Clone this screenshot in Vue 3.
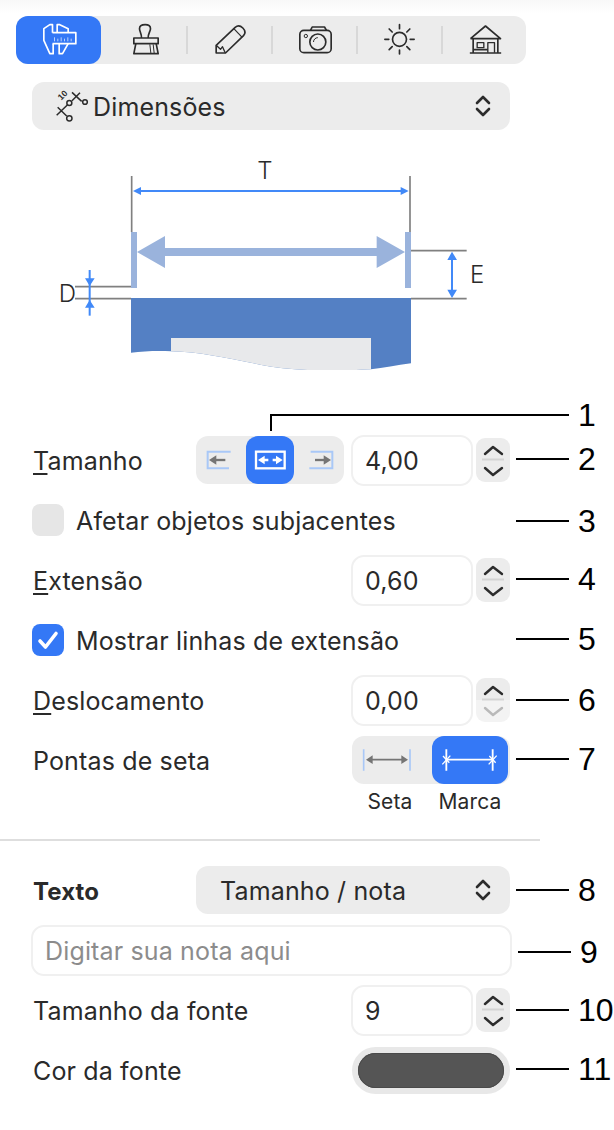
<script setup>
</script>

<template>
  <div class="page">
    <div class="toolbar">
      <div class="tool active">
        <svg width="36" height="36" viewBox="73.5 30 108 108" fill="none" stroke="#fff" stroke-width="5" stroke-linejoin="round">
          <path d="M108 62 V38 H100 L82 50 V85 L100 125 H110 V95" />
          <path d="M122 62 V38 H130 L155 50 V62" />
          <path d="M108 62 H178 V95 H108" />
          <path d="M128 95 V125 H138 L155 95" />
          <path d="M114 76 V88 M124 80 V88 M134 76 V88 M144 80 V88 M154 76 V88 M164 80 V88" stroke-width="2.500" stroke-opacity=".8" />
        </svg>
      </div>
      <div class="tool">
        <svg width="36" height="36" viewBox="328.5 30 108 108" fill="none" stroke="#2c2c2c" stroke-width="5" stroke-linejoin="round">
          <path d="M375 78 C376 66 369 58 369 50 C369 42 377 38 386 38 C395 38 402 42 402 50 C402 58 394 66 395 78" />
          <path d="M352 78 H425 V95 H352 Z" />
          <path d="M358 95 L352 125 H425 L419 95" />
          <path d="M400 97 L403 123 M410 97 L413 123" stroke-width="3" />
        </svg>
      </div>
      <div class="tool sep">
        <svg width="36" height="36" viewBox="31.5 30 108 108" fill="none" stroke="#2c2c2c" stroke-width="5" stroke-linejoin="round">
          <path d="M47 123 L47 100 L104 46 C112 39 120 41 127 48 C135 56 136 63 129 71 L75 123 Z" />
          <path d="M100 50 L125 76" stroke-width="3.500" />
          <path d="M47 100 L60 112 L66 104 L72 118 L75 123" stroke-width="4" />
        </svg>
      </div>
      <div class="tool sep">
        <svg width="36" height="36" viewBox="286.5 30 108 108" fill="none" stroke="#2c2c2c" stroke-width="5" stroke-linejoin="round">
          <rect x="298" y="55" width="94" height="67" rx="12" />
          <path d="M330 55 L335 45 H372 L378 55" />
          <circle cx="352" cy="90" r="24" />
          <path d="M339 90 A13 13 0 0 1 352 77" stroke-width="3" />
          <circle cx="316" cy="72" r="5" stroke-width="3" />
        </svg>
      </div>
      <div class="tool sep">
        <svg width="36" height="36" viewBox="31.5 30 108 108" fill="none" stroke="#2c2c2c" stroke-width="5" stroke-linecap="round">
          <circle cx="87" cy="82" r="21" />
          <path d="M87 38 V50 M87 114 V126 M43 82 H55 M119 82 H131 M56 51 L65 60 M118 51 L109 60 M56 113 L65 104 M118 113 L109 104" />
        </svg>
      </div>
      <div class="tool sep">
        <svg width="36" height="36" viewBox="286.5 30 108 108" fill="none" stroke="#2c2c2c" stroke-width="5" stroke-linejoin="round">
          <path d="M300 80 L345 42 L390 80 H300" />
          <path d="M308 80 V122 M382 80 V122 M298 123 H392 M308 113 H352" />
          <rect x="320" y="92" width="20" height="15" stroke-width="4" />
          <path d="M352 122 V92 H372 V122" stroke-width="4" />
        </svg>
      </div>
    </div>

    <div class="select select-top">
      <svg class="dim-icon" width="36" height="36" viewBox="75 30 108 108" fill="none" stroke="#2c2c2c" stroke-width="4.500">
        <path d="M126 43 L155 70 M150 44 L126 68" />
        <circle cx="118" cy="75" r="7.500" />
        <circle cx="165" cy="72" r="7" />
        <path d="M112 81 L80 112 M83 88 L110 114" />
        <circle cx="118" cy="121" r="8" />
        <text x="0" y="0" transform="translate(94 68) rotate(-45)" class="ten">10</text>
      </svg>
      <span class="select-text">Dimensões</span>
      <svg class="updown" width="16" height="24" viewBox="0 0 16 24" fill="none" stroke="#2c2c2c" stroke-width="2.600" stroke-linecap="round" stroke-linejoin="round">
        <path d="M2 9 L8 3 L14 9 M2 15 L8 21 L14 15" />
      </svg>
    </div>

    <svg class="diagram" width="450" height="220" viewBox="0 0 1350 660">
      <path d="M273 444 H1113 V640 C1070 646 1030 654 993 658 C880 664 760 664 660 644 C560 624 480 606 393 604 C350 602 310 604 273 608 Z" fill="#5480c4" />
      <path d="M393 564 H993 V658 C880 664 760 664 660 644 C560 624 480 606 393 604 Z" fill="#e8e9eb" />
      <g stroke="#808080" stroke-width="5" fill="none">
        <path d="M275 78 V246 M1110 78 V246" />
        <path d="M1113 302 H1280 M1113 446 H1280 M105 410 H273 M105 446 H273" />
      </g>
      <rect x="273" y="246" width="18" height="168" fill="#9ab3dc" />
      <rect x="1095" y="246" width="18" height="168" fill="#9ab3dc" />
      <path d="M291 306 L375 258 V294 H1010 V258 L1095 306 L1010 354 V318 H375 V354 Z" fill="#9ab3dc" />
      <g fill="#4189f8">
        <rect x="296" y="120" width="794" height="6" />
        <path d="M279 123 L303 111 V135 Z M1106 123 L1082 111 V135 Z" />
        <rect x="1233" y="320" width="6" height="110" />
        <path d="M1236 305 L1222 330 H1251 Z M1236 444 L1222 419 H1251 Z" />
        <rect x="146" y="360" width="6" height="137" />
        <path d="M149 408 L135 385 H164 Z M149 450 L135 473 H164 Z" />
      </g>
      <text x="675" y="88" class="dia-text" text-anchor="middle">T</text>
      <text x="1290" y="400" class="dia-text">E</text>
      <text x="56" y="455" class="dia-text">D</text>
    </svg>

    <div class="leader-row">
      <div class="elbow"></div>
      <span class="num">1</span>
    </div>

    <div class="row">
      <div class="main">
        <span class="label"><u>T</u>amanho</span>
        <div class="controls">
          <div class="seg seg-size">
            <div class="seg-cell side">
              <svg width="50" height="48" viewBox="18 108 150 144" fill="none">
                <path d="M122 155 H53 V205 H117" stroke="#a9c8f7" stroke-width="6" />
                <path d="M72 180 H106" stroke="#757575" stroke-width="7" />
                <path d="M57 180 L79 166 V194 Z" fill="#757575" />
              </svg>
            </div>
            <div class="seg-cell on mid">
              <svg width="48" height="48" viewBox="168 108 144 144" fill="none">
                <rect x="198" y="155" width="86" height="50" stroke="#fff" stroke-width="7" />
                <path d="M218 180 H235 M248 180 H264" stroke="#fff" stroke-width="7" />
                <path d="M204 180 L224 167 V193 Z M278 180 L258 167 V193 Z" fill="#fff" />
              </svg>
            </div>
            <div class="seg-cell side">
              <svg width="50" height="48" viewBox="312 108 150 144" fill="none">
                <path d="M362 155 H427 V205 H358" stroke="#a9c8f7" stroke-width="6" />
                <path d="M375 180 H408" stroke="#757575" stroke-width="7" />
                <path d="M423 180 L401 166 V194 Z" fill="#757575" />
              </svg>
            </div>
          </div>
          <div class="field">4,00</div>
          <div class="stepper">
            <svg width="34" height="44" viewBox="0 0 34 44" fill="none" stroke="#2c2c2c" stroke-width="2.400" stroke-linecap="round" stroke-linejoin="round">
              <path d="M9 16 L17 9 L26 16 M9 30 L17 37 L26 30" />
              <path d="M6 21.500 H28" stroke="#d4d4d4" stroke-width="2" stroke-linecap="butt" />
            </svg>
          </div>
        </div>
      </div>
      <div class="callout n1"><div class="line"></div><span class="num">2</span></div>
    </div>

    <div class="row">
      <div class="main check">
        <span class="box"></span>
        <span class="label">Afetar objetos subjacentes</span>
      </div>
      <div class="callout p1"><div class="line"></div><span class="num">3</span></div>
    </div>

    <div class="row">
      <div class="main">
        <span class="label"><u>E</u>xtensão</span>
        <div class="controls">
          <div class="field">0,60</div>
          <div class="stepper">
            <svg width="34" height="44" viewBox="0 0 34 44" fill="none" stroke="#2c2c2c" stroke-width="2.400" stroke-linecap="round" stroke-linejoin="round">
              <path d="M9 16 L17 9 L26 16 M9 30 L17 37 L26 30" />
              <path d="M6 21.500 H28" stroke="#d4d4d4" stroke-width="2" stroke-linecap="butt" />
            </svg>
          </div>
        </div>
      </div>
      <div class="callout n1"><div class="line"></div><span class="num">4</span></div>
    </div>

    <div class="row">
      <div class="main check">
        <span class="box checked">
          <svg width="32" height="32" viewBox="0 0 32 32" fill="none" stroke="#fff" stroke-width="3.600" stroke-linecap="round" stroke-linejoin="round">
            <path d="M8 17 L13.500 23 L24 9.500" />
          </svg>
        </span>
        <span class="label">Mostrar linhas de extensão</span>
      </div>
      <div class="callout n1"><div class="line"></div><span class="num">5</span></div>
    </div>

    <div class="row">
      <div class="main">
        <span class="label"><u>D</u>eslocamento</span>
        <div class="controls">
          <div class="field">0,00</div>
          <div class="stepper half">
            <svg width="34" height="44" viewBox="0 0 34 44" fill="none" stroke="#2c2c2c" stroke-width="2.400" stroke-linecap="round" stroke-linejoin="round">
              <path d="M9 16 L17 9 L26 16" />
              <path d="M9 30 L17 37 L26 30" stroke="#b9b9b9" />
              <path d="M6 21.500 H28" stroke="#d4d4d4" stroke-width="2" stroke-linecap="butt" />
            </svg>
          </div>
        </div>
      </div>
      <div class="callout"><div class="line"></div><span class="num">6</span></div>
    </div>

    <div class="row">
      <div class="main">
        <span class="label">Pontas de seta</span>
        <div class="seg seg-tips">
          <div class="tip">
            <svg width="76" height="48" viewBox="0 0 228 144" fill="none">
              <path d="M35 40 V104 M174 40 V104" stroke="#a9c8f7" stroke-width="5" />
              <path d="M55 71 H155" stroke="#757575" stroke-width="5.500" />
              <path d="M42 71 L62 58 V84 Z M168 71 L148 58 V84 Z" fill="#757575" />
            </svg>
          </div>
          <div class="tip on">
            <svg width="76" height="48" viewBox="0 0 228 144" fill="none" stroke="#fff">
              <path d="M43 40 V104 M182 40 V104 M43 71 H182" stroke-width="5.500" />
              <path d="M31 85 L55 59 M170 85 L194 59 M33 60 L52 80 M172 60 L191 80" stroke-width="4" />
            </svg>
          </div>
        </div>
      </div>
      <div class="callout n1"><div class="line"></div><span class="num">7</span></div>
    </div>

    <div class="tip-labels">
      <span>Seta</span>
      <span>Marca</span>
    </div>

    <div class="divider"></div>

    <div class="row">
      <div class="main">
        <span class="label strong">Texto</span>
        <div class="select select-text-kind">
          <span class="select-text">Tamanho / nota</span>
          <svg class="updown" width="16" height="24" viewBox="0 0 16 24" fill="none" stroke="#2c2c2c" stroke-width="2.600" stroke-linecap="round" stroke-linejoin="round">
            <path d="M2 9 L8 3 L14 9 M2 15 L8 21 L14 15" />
          </svg>
        </div>
      </div>
      <div class="callout"><div class="line"></div><span class="num">8</span></div>
    </div>

    <div class="row">
      <div class="main">
        <div class="note">Digitar sua nota aqui</div>
      </div>
      <div class="callout p2"><div class="line"></div><span class="num">9</span></div>
    </div>

    <div class="row">
      <div class="main">
        <span class="label">Tamanho da fonte</span>
        <div class="controls">
          <div class="field">9</div>
          <div class="stepper">
            <svg width="34" height="44" viewBox="0 0 34 44" fill="none" stroke="#2c2c2c" stroke-width="2.400" stroke-linecap="round" stroke-linejoin="round">
              <path d="M9 16 L17 9 L26 16 M9 30 L17 37 L26 30" />
              <path d="M6 21.500 H28" stroke="#d4d4d4" stroke-width="2" stroke-linecap="butt" />
            </svg>
          </div>
        </div>
      </div>
      <div class="callout"><div class="line"></div><span class="num">10</span></div>
    </div>

    <div class="row">
      <div class="main">
        <span class="label">Cor da fonte</span>
        <div class="well"><div class="well-inner"></div></div>
      </div>
      <div class="callout n1"><div class="line"></div><span class="num">11</span></div>
    </div>
  </div>
</template>

<style scoped>
.page {
  box-sizing: border-box;
  width: 614px;
  height: 1130px;
  padding-top: 16px;
  overflow: hidden;
  background: linear-gradient(#f8f8f8, #ffffff 14px);
  color: #2a2a2a;
  font-family: Inter, "Liberation Sans", sans-serif;
  font-size: 25px;
  letter-spacing: 0.15px;
}
.toolbar {
  display: flex;
  width: 510px;
  height: 48px;
  margin-left: 16px;
  border-radius: 12px;
  background: #ececec;
}
.tool {
  display: flex;
  flex: 0 0 85px;
  align-items: center;
  justify-content: center;
  border-radius: 12px;
}
.tool.sep {
  border-radius: 0;
  background: linear-gradient(#d8d8d8, #d8d8d8) left center / 2px 28px no-repeat;
}
.tool.active {
  background: #3478f6;
}
.select {
  display: flex;
  align-items: center;
  height: 48px;
  border-radius: 12px;
  background: #ececec;
}
.select-text {
  margin-top: 2px;
}
.select-top {
  width: 478px;
  margin: 18px 0 0 32px;
}
.dim-icon {
  margin-left: 23px;
  margin-right: 2px;
}
.ten {
  fill: #2c2c2c;
  stroke: none;
  font-family: "Liberation Sans", sans-serif;
  font-size: 26px;
  font-weight: 700;
}
.updown {
  margin-left: auto;
  margin-right: 19px;
}
.diagram {
  display: block;
  margin: 20px 0 0 40px;
}
.dia-text {
  fill: #2a2a2a;
  font-family: Inter, "Liberation Sans", sans-serif;
  font-size: 72px;
  font-weight: 300;
}
.leader-row {
  display: flex;
  align-items: flex-start;
  height: 30px;
  margin-top: 30px;
}
.elbow {
  box-sizing: border-box;
  width: 299px;
  height: 17px;
  margin: 14px 0 0 270px;
  border-top: 2px solid #000;
  border-left: 2px solid #000;
}
.leader-row .num {
  line-height: 30px;
}
.row {
  display: flex;
  align-items: center;
  height: 60px;
}
.main {
  display: flex;
  flex: 0 0 478px;
  align-items: center;
  justify-content: space-between;
  margin-left: 32px;
  margin-right: 6px;
}
.check {
  justify-content: flex-start;
  gap: 11px;
}
.label {
  margin-top: 2px;
  margin-left: 1px;
}
.label u {
  text-decoration-thickness: 1.5px;
  text-underline-offset: 3px;
}
.strong {
  font-size: 24px;
  font-weight: 700;
  letter-spacing: 0.1px;
}
.controls {
  display: flex;
  align-items: center;
}
.seg {
  display: flex;
  height: 48px;
  border-radius: 12px;
  background: #ececec;
}
.seg-size {
  width: 148px;
  margin-right: 7px;
}
.seg-cell.side {
  width: 50px;
}
.seg-cell.mid {
  width: 48px;
}
.on {
  border-radius: 12px;
  background: #3478f6;
}
.seg svg {
  display: block;
}
.seg-tips {
  box-sizing: border-box;
  width: 158px;
  gap: 4px;
  padding-right: 2px;
}
.tip {
  width: 76px;
}
.field {
  box-sizing: border-box;
  width: 122px;
  height: 51px;
  padding-left: 12px;
  border: 2px solid #f0f0f0;
  border-radius: 13px;
  background: #fff;
  line-height: 49px;
}
.stepper {
  width: 34px;
  height: 44px;
  margin-left: 3px;
  border-radius: 9px;
  background: #ececec;
}
.stepper svg {
  display: block;
}
.stepper.half {
  background: linear-gradient(#ececec 50%, #f3f3f3 50%);
}
.box {
  flex: none;
  width: 32px;
  height: 32px;
  border-radius: 8px;
  background: #e6e6e6;
}
.box.checked {
  background: #3478f6;
}
.box svg {
  display: block;
}
.callout {
  display: flex;
  align-items: center;
}
.callout.n1 {
  margin-top: -2px;
}
.callout.p1 {
  margin-top: 2px;
}
.callout.p2 {
  margin-top: 4px;
}
.line {
  flex: 0 0 53px;
  height: 2px;
  background: #000;
}
.num {
  margin-left: 9px;
  color: #000;
  font-family: "Liberation Sans", Arial, sans-serif;
  font-size: 32px;
  letter-spacing: 0;
  line-height: 36px;
}
.tip-labels {
  display: flex;
  gap: 4px;
  height: 24px;
  margin-left: 352px;
  font-size: 21px;
  line-height: 24px;
}
.tip-labels span {
  width: 76px;
  text-align: center;
}
.divider {
  width: 540px;
  height: 2px;
  margin: 25px 0 19px;
  background: #dedede;
}
.select-text-kind {
  width: 314px;
}
.select-text-kind .select-text {
  margin-left: 24px;
}
.note {
  box-sizing: border-box;
  width: 481px;
  height: 51px;
  margin-left: -1px;
  padding-left: 12px;
  border: 2px solid #f0f0f0;
  border-radius: 13px;
  color: #8c8c8c;
  line-height: 49px;
}
.well {
  box-sizing: border-box;
  width: 158px;
  height: 47px;
  padding: 6px;
  border-radius: 24px;
  background: #e8e8e8;
}
.well-inner {
  height: 35px;
  border-radius: 18px;
  background: #555555;
  box-shadow: inset 0 0 0 1px #4a4a4a;
}
</style>
